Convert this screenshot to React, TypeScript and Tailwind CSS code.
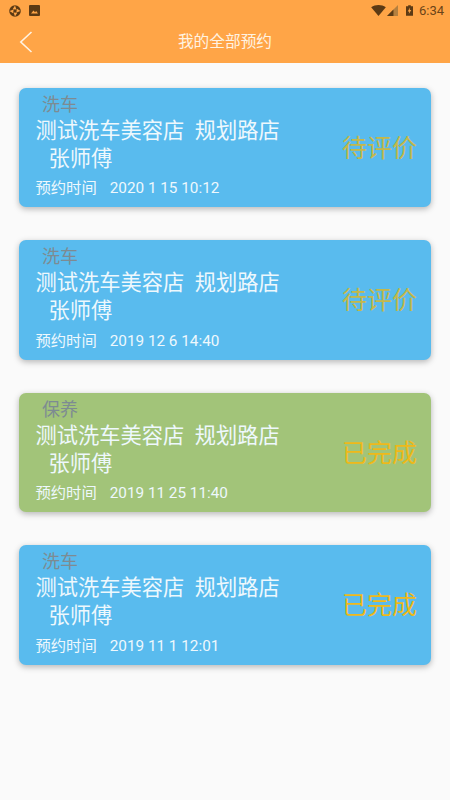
import React from "react";

interface Booking {
  type: string;
  time: string;
  status: string;
  green?: boolean;
  statusDim?: boolean;
}

const bookings: Booking[] = [
  { type: "洗车", time: "2020 1 15 10:12", status: "待评价", statusDim: true },
  { type: "洗车", time: "2019 12 6 14:40", status: "待评价", statusDim: true },
  { type: "保养", time: "2019 11 25 11:40", status: "已完成", green: true },
  { type: "洗车", time: "2019 11 1 12:01", status: "已完成" },
];

const BookingCard = ({ item }: { item: Booking }) => (
  <div
    className={`flex h-[119.5px] items-center justify-between rounded-[7px] pl-[17px] pr-[14px] shadow-[0_2px_6px_rgba(0,0,0,0.28)] ${
      item.green ? "bg-[#a2c479]" : "bg-[#59bbee]"
    }`}
  >
    <div className="flex h-full flex-col">
      <div className="mt-[6px] h-[21px] pl-[6px] text-[18px] leading-[21px] text-[#7d8b92]">{item.type}</div>
      <div className="ml-[-0.5px] mt-[1px] h-[29px] text-[21.25px] leading-[29px] text-[#eef8fd]">测试洗车美容店&nbsp;&nbsp;规划路店</div>
      <div className="h-[28.5px] pl-[12.5px] text-[21.25px] leading-[28.5px] text-[#eef8fd]">张师傅</div>
      <div className="ml-[-0.5px] mt-[3px] flex h-[24px] items-center text-[15.3px] leading-[24px] text-[#eef8fd]">
        <span>预约时间</span>
        <span className="ml-[13px]">{item.time}</span>
      </div>
    </div>
    <div className={`mt-[2px] text-[25px] ${item.statusDim ? "text-[#c4b84a]" : "text-[#eeb91a]"}`}>{item.status}</div>
  </div>
);

export default function App() {
  return (
    <div className="flex h-[800px] w-[450px] flex-col overflow-hidden bg-[#fafafa] font-['Roboto','Noto_Sans_CJK_SC',sans-serif]">
      <div className="h-[63px] bg-[#ffa547]">
        {/* Status bar */}
        <div className="flex h-[21px] items-center justify-between pl-[9px] pr-[6px] text-[#6b4418]">
          <div className="flex items-center gap-[8px]">
            <svg width="12" height="12" viewBox="0 0 13 13">
              <circle cx="6.5" cy="6.5" r="6.3" fill="#5c3a14" />
              <path d="M6.5 .5 8 5 4 4.5ZM12.5 6.5 8 8 8.5 4ZM6.5 12.5 5 8 9 8.5ZM.5 6.5 5 5 4.5 9Z" fill="#ffa547" />
            </svg>
            <svg width="11" height="11" viewBox="0 0 11 11">
              <rect width="11" height="11" rx="1" fill="#5c3a14" />
              <path d="M2 8.5 4.5 5.5 6 7.2 7.2 6 9 8.5Z" fill="#ffa547" />
            </svg>
          </div>
          <div className="flex items-center">
            <svg width="15" height="11" viewBox="0 0 16 12">
              <path d="M0 2.5C4.5-.8 11.5-.8 16 2.5L8 12Z" fill="#5c3a14" />
            </svg>
            <svg className="ml-[1px]" width="11" height="11" viewBox="0 0 12 12">
              <path d="M12 0V12H0Z" fill="#b5803f" />
              <path d="M7 5V12H0Z" fill="#5c3a14" />
            </svg>
            <svg className="ml-[8px]" width="7" height="11" viewBox="0 0 8 12">
              <path d="M2.5 0H5.5V1H8V12H0V1H2.5Z" fill="#5c3a14" />
              <path d="M4.5 2.5 2 7H3.7L3.2 10 6 5.5H4.3Z" fill="#ffa547" />
            </svg>
            <span className="ml-[6px] text-[13px] leading-none">6:34</span>
          </div>
        </div>
        {/* Title bar */}
        <div className="flex h-[42px] items-center">
          <div className="flex w-[51px] shrink-0 justify-center">
            <svg width="14" height="22" viewBox="0 0 14 22" fill="none" stroke="#fff3e2" strokeWidth="1.6">
              <path d="M12.5 1 1.8 11 12.5 21" />
            </svg>
          </div>
          <div className="flex-1 pr-[51px] text-center text-[15.7px] text-[#fff3e2]">我的全部预约</div>
        </div>
      </div>
      {/* Booking list */}
      <div className="flex flex-col gap-[33px] px-[19px] pt-[24.5px]">
        {bookings.map((item, index) => (
          <BookingCard key={index} item={item} />
        ))}
      </div>
    </div>
  );
}
